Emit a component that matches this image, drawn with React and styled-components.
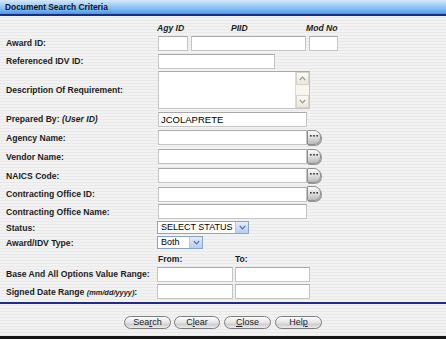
import React from "react";
import styled, { createGlobalStyle } from "styled-components";

const GlobalStyle = createGlobalStyle`
  html, body { margin: 0; padding: 0; overflow: hidden; }
  body { font-family: "Liberation Sans", Arial, sans-serif; }
`;

const Window = styled.div`
  width: 446px;
  height: 339px;
  box-sizing: border-box;
  display: flex;
  flex-direction: column;
  border-bottom: 3px solid #161616;
  background: repeating-linear-gradient(180deg, #f2f2f2 0 2px, #e9e9e9 2px 3px);
`;

const TitleBar = styled.div`
  height: 14px;
  flex: none;
  display: flex;
  align-items: center;
  padding-left: 5px;
  border-bottom: 2px solid #1b2b86;
  background: linear-gradient(180deg, #d4e8fb 0%, #a6d0f6 35%, #6fb2f0 75%, #4f95de 100%);
  font: bold 8.4px "Liberation Sans", Arial, sans-serif;
  color: #0e1428;
`;

const Form = styled.div`
  flex: 1;
  display: flex;
  flex-direction: column;
  padding-left: 6px;
`;

const Row = styled.div`
  display: grid;
  grid-template-columns: 152px 1fr;
  align-items: ${({ $align }) => $align || "center"};
  height: ${({ $h }) => $h}px;
`;

const Label = styled.div`
  font: bold 8.6px "Liberation Sans", Arial, sans-serif;
  color: #1c1c1c;
  white-space: nowrap;
  em { font-style: italic; }
  small { font-size: 7.4px; font-style: italic; }
`;

const Fields = styled.div`
  display: flex;
  align-items: center;
  gap: ${({ $gap }) => $gap ?? 0}px;
  margin-left: ${({ $shift }) => $shift ?? 0}px;
`;

const HeadCell = styled.div`
  width: ${({ $w }) => $w}px;
  padding-bottom: 1px;
  font: bold 8.6px "Liberation Sans", Arial, sans-serif;
  font-style: ${({ $plain }) => ($plain ? "normal" : "italic")};
  color: #1c1c1c;
`;

const Input = styled.input`
  width: ${({ $w }) => $w}px;
  height: 15px;
  box-sizing: border-box;
  margin: 0;
  padding: 0 2px;
  border: 1px solid #c4c4c4;
  border-top-color: #a9a9a9;
  background: #fff;
  font: 9.5px "Liberation Sans", Arial, sans-serif;
  color: #000;
  outline: none;
`;

const PickButton = styled.button`
  width: 14px;
  height: 15px;
  margin: -1px 0 0 0;
  padding: 0 1px 2px 0;
  box-sizing: border-box;
  display: flex;
  align-items: center;
  justify-content: center;
  border: 1px solid #8e8e8e;
  border-radius: 1px 7px 7px 1px;
  background: linear-gradient(180deg, #fafafa 0%, #dcdcdc 55%, #b9b9b9 100%);
  box-shadow: 1px 1px 0 #9a9a9a;
`;

const TextBox = styled.div`
  width: 152px;
  height: 38px;
  box-sizing: border-box;
  display: flex;
  border: 1px solid #c4c4c4;
  border-top-color: #a9a9a9;
  background: #fff;
`;

const TextArea = styled.div`
  flex: 1;
`;

const ScrollBar = styled.div`
  width: 13px;
  display: flex;
  flex-direction: column;
  justify-content: space-between;
  background: #f6f5ef;
  border-left: 1px solid #dedbd0;
`;

const ScrollArrow = styled.div`
  height: 11px;
  display: flex;
  align-items: center;
  justify-content: center;
  background: linear-gradient(180deg, #fbfaf5, #e9e7dc);
  border: 1px solid #d8d5c8;
`;

const SelectBox = styled.div`
  width: ${({ $w }) => $w}px;
  height: 13px;
  box-sizing: border-box;
  display: flex;
  align-items: stretch;
  border: 1px solid #8aa5c9;
  background: #fff;
  font: 9px "Liberation Sans", Arial, sans-serif;
  color: #000;
`;

const SelectValue = styled.span`
  flex: 1;
  padding-left: 3px;
  line-height: 11px;
  white-space: nowrap;
  overflow: hidden;
`;

const SelectArrow = styled.span`
  width: 12px;
  display: flex;
  align-items: center;
  justify-content: center;
  background: linear-gradient(180deg, #e3ecfb, #b9cdf1);
  border-left: 1px solid #b3c6ea;
`;

const Footer = styled.div`
  flex: none;
  height: 28px;
  border-top: 2px solid #1f2b8c;
  display: flex;
  justify-content: center;
  align-items: center;
  gap: 3px;
  padding-top: 4px;
  box-sizing: content-box;
`;

const PillButton = styled.button`
  width: ${({ $w }) => $w}px;
  height: 13px;
  margin: 0 ${({ $m }) => $m ?? 0}px;
  padding: 0;
  box-sizing: border-box;
  border: 1px solid #7d7d7d;
  border-radius: 7px;
  background: linear-gradient(180deg, #fdfdfd 0%, #e4e4e4 50%, #cfcfcf 70%, #ececec 100%);
  font: 9px "Liberation Sans", Arial, sans-serif;
  line-height: 10px;
  color: #222;
  u { text-decoration: underline; }
`;

const Chevron = ({ down, color = "#9a9a90" }) => (
  <svg width="7" height="5" viewBox="0 0 7 5">
    <path
      d={down ? "M0.8 1 L3.5 3.8 L6.2 1" : "M0.8 4 L3.5 1.2 L6.2 4"}
      fill="none"
      stroke={color}
      strokeWidth="1.2"
    />
  </svg>
);

const Dots = () => (
  <svg width="8" height="2" viewBox="0 0 8 2">
    <rect x="0" y="0" width="1.6" height="1.6" fill="#333" />
    <rect x="3.2" y="0" width="1.6" height="1.6" fill="#333" />
    <rect x="6.4" y="0" width="1.6" height="1.6" fill="#333" />
  </svg>
);

const Select = ({ w, value }) => (
  <SelectBox $w={w}>
    <SelectValue>{value}</SelectValue>
    <SelectArrow>
      <Chevron down color="#4f74b8" />
    </SelectArrow>
  </SelectBox>
);

const LookupRow = ({ label, h = 19 }) => (
  <Row $h={h}>
    <Label>{label}</Label>
    <Fields>
      <Input $w={149} />
      <PickButton>
        <Dots />
      </PickButton>
    </Fields>
  </Row>
);

export default function App() {
  return (
    <Window>
      <GlobalStyle />
      <TitleBar>Document Search Criteria</TitleBar>
      <Form>
        <Row $h={18} $align="end">
          <span />
          <Fields $shift={-1}>
            <HeadCell $w={74}>Agy ID</HeadCell>
            <HeadCell $w={75}>PIID</HeadCell>
            <HeadCell $w={40}>Mod No</HeadCell>
          </Fields>
        </Row>
        <Row $h={18}>
          <Label>Award ID:</Label>
          <Fields $gap={3}>
            <Input $w={30} />
            <Input $w={115} />
            <Input $w={29} />
          </Fields>
        </Row>
        <Row $h={18}>
          <Label>Referenced IDV ID:</Label>
          <Fields>
            <Input $w={117} />
          </Fields>
        </Row>
        <Row $h={40}>
          <Label>Description Of Requirement:</Label>
          <Fields>
            <TextBox>
              <TextArea />
              <ScrollBar>
                <ScrollArrow>
                  <Chevron />
                </ScrollArrow>
                <ScrollArrow>
                  <Chevron down />
                </ScrollArrow>
              </ScrollBar>
            </TextBox>
          </Fields>
        </Row>
        <Row $h={18}>
          <Label>
            Prepared By: <em>(User ID)</em>
          </Label>
          <Fields>
            <Input $w={149} defaultValue="JCOLAPRETE" />
          </Fields>
        </Row>
        <LookupRow label="Agency Name:" />
        <LookupRow label="Vendor Name:" />
        <LookupRow label="NAICS Code:" />
        <LookupRow label="Contracting Office ID:" h={18} />
        <Row $h={17}>
          <Label>Contracting Office Name:</Label>
          <Fields>
            <Input $w={149} />
          </Fields>
        </Row>
        <Row $h={15}>
          <Label>Status:</Label>
          <Fields $shift={-1}>
            <Select w={92} value="SELECT STATUS" />
          </Fields>
        </Row>
        <Row $h={15}>
          <Label>Award/IDV Type:</Label>
          <Fields $shift={-1}>
            <Select w={46} value="Both" />
          </Fields>
        </Row>
        <Row $h={15} $align="end">
          <span />
          <Fields>
            <HeadCell $w={77} $plain>From:</HeadCell>
            <HeadCell $w={40} $plain>To:</HeadCell>
          </Fields>
        </Row>
        <Row $h={18}>
          <Label>Base And All Options Value Range:</Label>
          <Fields $gap={2} $shift={-1}>
            <Input $w={76} />
            <Input $w={75} />
          </Fields>
        </Row>
        <Row $h={17}>
          <Label>
            Signed Date Range <small>(mm/dd/yyyy)</small>:
          </Label>
          <Fields $gap={2} $shift={-1}>
            <Input $w={76} />
            <Input $w={75} />
          </Fields>
        </Row>
      </Form>
      <Footer>
        <PillButton $w={47}>
          Sea<u>r</u>ch
        </PillButton>
        <PillButton $w={46}>
          C<u>l</u>ear
        </PillButton>
        <PillButton $w={47} $m={1}>
          <u>C</u>lose
        </PillButton>
        <PillButton $w={47}>
          Hel<u>p</u>
        </PillButton>
      </Footer>
    </Window>
  );
}
